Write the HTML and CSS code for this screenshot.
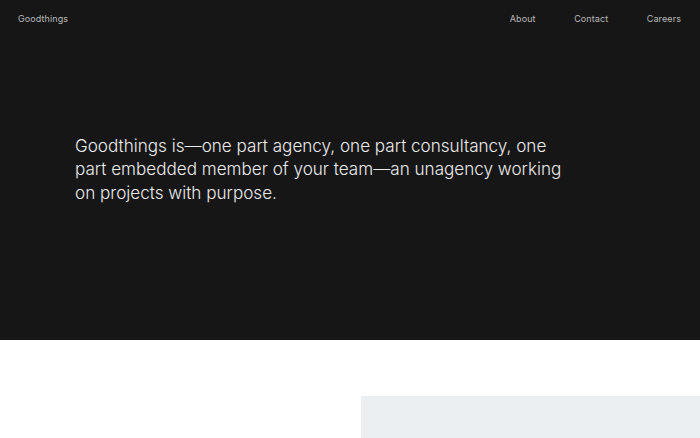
FILE: index.html
```html
<!DOCTYPE html>
<html>
<head>
<meta charset="utf-8">
<link rel="stylesheet" href="styles.css">
</head>
<body>
<section class="hero">
  <header class="nav">
    <a class="brand" href="#">Goodthings</a>
    <nav class="links">
      <a href="#">About</a>
      <a href="#">Contact</a>
      <a href="#">Careers</a>
    </nav>
  </header>
  <p class="intro">Goodthings is—one part agency, one part consultancy, one part embedded member of your team—an unagency working on projects with purpose.</p>
</section>
<section class="below">
  <div class="panel"></div>
</section>
</body>
</html>
```
FILE: styles.css
```css
* { box-sizing: border-box; }
html, body { margin: 0; padding: 0; }
body {
  font-family: Inter, "Noto Sans", sans-serif;
  background: #ffffff;
  overflow: hidden;
}
.hero {
  background: #161616;
  height: 340px;
  display: flex;
  flex-direction: column;
}
.nav {
  display: flex;
  justify-content: space-between;
  align-items: center;
  padding: 0 19px 0 18px;
  height: 36px;
}
.nav a {
  color: #b9b9b9;
  text-decoration: none;
  font-size: 9px;
  letter-spacing: 0.1px;
}
.links {
  display: flex;
  gap: 38.5px;
}
.intro {
  margin: 98px 0 0 75px;
  width: 492px;
  color: #ececec;
  font-size: 17.1px;
  line-height: 23.3px;
  font-weight: 300;
}
.below {
  padding: 56px 0 0 361px;
}
.panel {
  background: #eceff2;
  height: 60px;
}
```
